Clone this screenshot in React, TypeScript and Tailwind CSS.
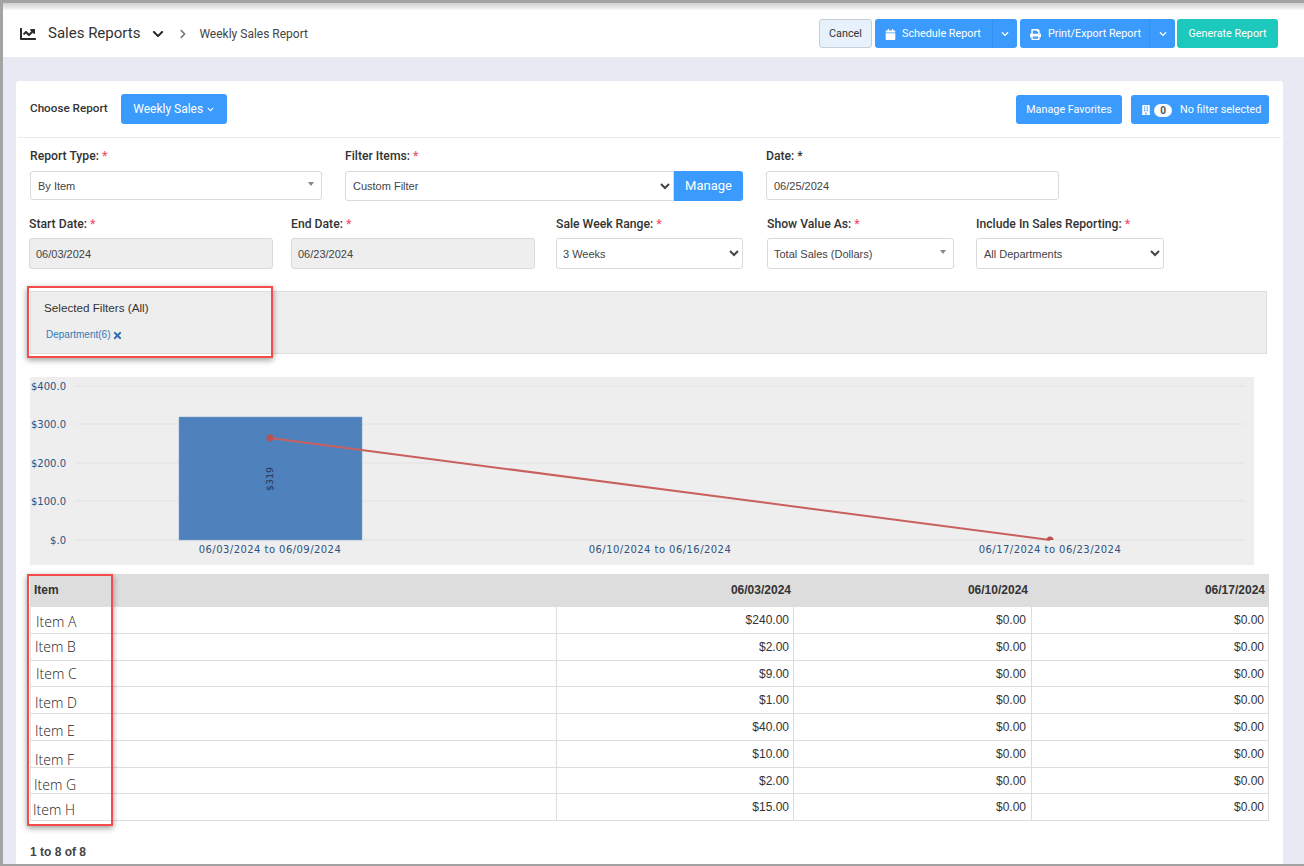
import { FaBuilding, FaCalendar, FaChartLine, FaChevronDown, FaChevronRight, FaPrint, FaTimes } from "react-icons/fa";

const rows = [
  { name: "Item A", value: "$240.00", cell: "h-[26px] pt-[4px] pl-[5px]" },
  { name: "Item B", value: "$2.00", cell: "h-[26px] pl-[4px]" },
  { name: "Item C", value: "$9.00", cell: "h-[25px] pl-[5px]" },
  { name: "Item D", value: "$1.00", cell: "h-[26px] pt-[6px] pl-[4px]" },
  { name: "Item E", value: "$40.00", cell: "h-[26px] pt-[8px] pl-[4px]" },
  { name: "Item F", value: "$10.00", cell: "h-[26px] pt-[12px] pl-[4px]" },
  { name: "Item G", value: "$2.00", cell: "h-[25px] pt-[9px] pl-[3px]" },
  { name: "Item H", value: "$15.00", cell: "h-[26px] pt-[6px] pl-[2px]" },
];

const gridLines = [
  { y: 9, label: "$400.0" },
  { y: 47, label: "$300.0" },
  { y: 86, label: "$200.0" },
  { y: 124, label: "$100.0" },
  { y: 163, label: "$.0" },
];

function Label({ text, plain }: { text: string; plain?: boolean }) {
  return (
    <div className="h-[18px] text-[12.2px] leading-[18px] font-medium text-[#333]">
      {text} <span className={plain ? "text-[#333]" : "text-[#f4516c]"}>*</span>
    </div>
  );
}

function FakeSelect({ text, inset }: { text: string; inset: string }) {
  return (
    <div className={`flex h-full items-center justify-between rounded-[3px] border border-[#d9d9d9] bg-white pr-[7px] font-['Liberation_Sans',sans-serif] text-[11px] text-[#444] ${inset}`}>
      <span className="pt-[2px]">{text}</span>
      <span className="mb-[4px] h-0 w-0 border-x-[3px] border-t-[4px] border-x-transparent border-t-[#888]" />
    </div>
  );
}

function NativeSelect({ text, className }: { text: string; className: string }) {
  return (
    <select
      defaultValue={text}
      className={`border border-[#d9d9d9] bg-white font-['Liberation_Sans',sans-serif] text-[11px] text-[#444] outline-none ${className}`}
    >
      <option>{text}</option>
    </select>
  );
}

function SalesChart() {
  return (
    <div className="mt-[23px] ml-[14px] h-[188px] w-[1224px] bg-[#eeeeee]">
      <svg width="1224" height="188" viewBox="0 0 1224 188" className="block">
        {gridLines.map((g) => (
          <g key={g.label}>
            <line x1="45" x2="1215" y1={g.y} y2={g.y} stroke="#e2e2e2" strokeWidth="1" />
            <text x="36" y={g.y + 4} textAnchor="end" fontFamily="DejaVu Sans, sans-serif" fontSize="10" fill="#2f5280">
              {g.label}
            </text>
          </g>
        ))}
        <rect x="149" y="40" width="183" height="123" fill="#4f81bd" stroke="#7ea3d0" strokeWidth="0.5" />
        <text
          transform="translate(243 102) rotate(-90)"
          textAnchor="middle"
          fontFamily="DejaVu Sans, sans-serif"
          fontSize="9.5"
          fill="#27374d"
        >
          $319
        </text>
        <line x1="240" y1="61" x2="1020" y2="163" stroke="#c9605d" strokeWidth="2" />
        <circle cx="240" cy="61" r="3.4" fill="#c0504d" />
        <path d="M1016.5 163 A3.5 3.5 0 0 1 1023.5 163 Z" fill="#c0504d" />
        {[
          { x: 240, label: "06/03/2024 to 06/09/2024" },
          { x: 630, label: "06/10/2024 to 06/16/2024" },
          { x: 1020, label: "06/17/2024 to 06/23/2024" },
        ].map((t) => (
          <text
            key={t.label}
            x={t.x}
            y="176"
            textAnchor="middle"
            fontFamily="DejaVu Sans, sans-serif"
            fontSize="10"
            fill="#2f5280"
            letterSpacing="0.45"
          >
            {t.label}
          </text>
        ))}
      </svg>
    </div>
  );
}

function ReportTable() {
  return (
    <div className="mt-[9px] ml-[14px] w-[1239px] font-['Liberation_Sans',sans-serif] text-[12px] text-[#333]">
      <div className="grid h-[33px] grid-cols-[527px_237px_238px_237px] items-center bg-[#dddddd] font-bold">
        <div className="pb-[2px] pl-[4px]">Item</div>
        <div className="pr-[3px] pb-[2px] text-right">06/03/2024</div>
        <div className="pr-[4px] pb-[2px] text-right">06/10/2024</div>
        <div className="pr-[4px] pb-[2px] text-right">06/17/2024</div>
      </div>
      <div className="border-l border-[#dddddd]">
        {rows.map((r) => (
          <div key={r.name} className="grid grid-cols-[526px_237px_238px_237px] border-b border-[#dddddd]">
            <div className={`flex items-center border-r border-[#dddddd] font-['Open_Sans',sans-serif] text-[14px] leading-[14px] font-light text-[#222] ${r.cell}`}>
              {r.name}
            </div>
            <div className="flex items-center justify-end border-r border-[#dddddd] pr-[4px]">{r.value}</div>
            <div className="flex items-center justify-end border-r border-[#dddddd] pr-[5px]">$0.00</div>
            <div className="flex items-center justify-end border-r border-[#dddddd] pr-[4px]">$0.00</div>
          </div>
        ))}
      </div>
    </div>
  );
}

export default function App() {
  return (
    <div className="relative h-[866px] w-[1304px] overflow-hidden border-t-[3px] border-b-[2px] border-l-[3px] border-[#a3a3a3] bg-[#e8eaf3] font-['Roboto',sans-serif]">
      <div className="h-[7px] bg-gradient-to-b from-[#cfcfcf] to-[#f7f7f7]" />

      {/* top bar */}
      <header className="flex h-[47px] items-center justify-between bg-white pr-[26px] pl-[17px]">
        <div className="flex items-center text-[#333]">
          <FaChartLine className="text-[16px] text-[#2b2b2b]" />
          <span className="ml-[12px] text-[15px]">Sales Reports</span>
          <FaChevronDown className="ml-[12px] text-[12px] text-[#222]" />
          <FaChevronRight className="ml-[14px] text-[10px] text-[#777]" />
          <span className="ml-[11px] text-[12px] text-[#444]">Weekly Sales Report</span>
        </div>
        <div className="flex h-[29px] items-stretch text-[10.8px] text-white">
          <button className="w-[53px] rounded-[3px] border border-[#c9ced6] bg-[#e6f1fb] pt-[2px] text-[#333]">Cancel</button>
          <button className="ml-[3px] flex w-[117px] items-center rounded-l-[3px] bg-[#3a9bfd] pt-[2px] pl-[10px]">
            <FaCalendar className="text-[11px]" />
            <span className="ml-[6px]">Schedule Report</span>
          </button>
          <button className="flex w-[25px] items-center justify-center rounded-r-[3px] border-l border-[#3592f0] bg-[#3a9bfd]">
            <FaChevronDown className="text-[8px]" />
          </button>
          <button className="ml-[3px] flex w-[129px] items-center rounded-l-[3px] bg-[#3a9bfd] pt-[2px] pl-[10px]">
            <FaPrint className="text-[11px]" />
            <span className="ml-[7px]">Print/Export Report</span>
          </button>
          <button className="flex w-[26px] items-center justify-center rounded-r-[3px] border-l border-[#3592f0] bg-[#3a9bfd]">
            <FaChevronDown className="text-[8px]" />
          </button>
          <button className="ml-[2px] w-[101px] rounded-[3px] bg-[#1dc8bd] pt-[2px]">Generate Report</button>
        </div>
      </header>

      {/* report card */}
      <main className="mt-[24px] ml-[13px] h-[800px] w-[1267px] rounded-t-[3px] bg-white">
        <div className="mx-[2px] flex h-[57px] items-center justify-between border-b border-[#ebebeb] pr-[12px] pl-[12px]">
          <div className="flex items-center">
            <span className="text-[11.7px] font-medium text-[#333]">Choose Report</span>
            <button className="ml-[13px] flex h-[30px] w-[106px] items-center justify-center gap-[4px] rounded-[3px] bg-[#3a9bfd] text-[12px] text-white">
              Weekly Sales
              <FaChevronDown className="text-[7px]" />
            </button>
          </div>
          <div className="flex h-[29px] gap-[9px] text-[10.8px] text-white">
            <button className="w-[106px] rounded-[3px] bg-[#3a9bfd] pt-[2px]">Manage Favorites</button>
            <button className="flex w-[138px] items-center rounded-[3px] bg-[#3a9bfd] pt-[2px] pl-[10px]">
              <FaBuilding className="text-[10px]" />
              <span className="ml-[3px] flex h-[13px] w-[18px] items-center justify-center rounded-full bg-white text-[10px] font-bold text-[#555]">
                0
              </span>
              <span className="ml-[8px]">No filter selected</span>
            </button>
          </div>
        </div>

        <div className="mt-[9px] flex pl-[14px]">
          <div className="w-[292px]">
            <Label text="Report Type:" />
            <div className="mt-[6px] h-[29px]">
              <FakeSelect text="By Item" inset="pl-[7px]" />
            </div>
          </div>
          <div className="ml-[23px] w-[398px]">
            <Label text="Filter Items:" />
            <div className="mt-[6px] flex h-[30px]">
              <NativeSelect text="Custom Filter" className="h-full w-[329px] rounded-l-[3px] pl-[3px]" />
              <button className="w-[69px] rounded-r-[3px] bg-[#3a9bfd] pb-[1px] text-[13px] text-white">Manage</button>
            </div>
          </div>
          <div className="ml-[23px] w-[293px]">
            <Label text="Date:" plain />
            <div className="mt-[6px] flex h-[29px] items-center rounded-[3px] border border-[#d9d9d9] pt-[2px] pl-[7px] font-['Liberation_Sans',sans-serif] text-[11px] text-[#444]">
              06/25/2024
            </div>
          </div>
        </div>

        <div className="mt-[14px] flex pl-[13px]">
          <div className="w-[244px]">
            <Label text="Start Date:" />
            <div className="mt-[5px] flex h-[31px] items-center rounded-[3px] border border-[#d9d9d9] bg-[#eeeeee] pt-[2px] pl-[6px] font-['Liberation_Sans',sans-serif] text-[11px] text-[#444]">
              06/03/2024
            </div>
          </div>
          <div className="ml-[18px] w-[244px]">
            <Label text="End Date:" />
            <div className="mt-[5px] flex h-[31px] items-center rounded-[3px] border border-[#d9d9d9] bg-[#eeeeee] pt-[2px] pl-[6px] font-['Liberation_Sans',sans-serif] text-[11px] text-[#444]">
              06/23/2024
            </div>
          </div>
          <div className="ml-[21px] w-[187px]">
            <Label text="Sale Week Range:" />
            <NativeSelect text="3 Weeks" className="mt-[5px] h-[31px] w-full rounded-[3px] pl-[2px]" />
          </div>
          <div className="ml-[24px] w-[187px]">
            <Label text="Show Value As:" />
            <div className="mt-[5px] h-[31px]">
              <FakeSelect text="Total Sales (Dollars)" inset="pl-[6px]" />
            </div>
          </div>
          <div className="ml-[22px] w-[188px]">
            <Label text="Include In Sales Reporting:" />
            <NativeSelect text="All Departments" className="mt-[5px] h-[31px] w-full rounded-[3px] pl-[3px]" />
          </div>
        </div>

        {/* selected filters */}
        <div className="mt-[22px] ml-[14px] h-[63px] w-[1237px] border border-[#dddddd] bg-[#eeeeee] pt-[9px] pl-[13px]">
          <div className="font-['Liberation_Sans',sans-serif] text-[11.7px] leading-[14px] text-[#333]">Selected Filters (All)</div>
          <div className="mt-[14px] ml-[2px] flex items-center gap-[2px] font-['Liberation_Sans',sans-serif] text-[10px] leading-[12px] text-[#337ab7]">
            Department(6)
            <FaTimes className="text-[11px] text-[#2f6fb0]" />
          </div>
        </div>

        <SalesChart />
        <ReportTable />

        <div className="mt-[22px] ml-[14px] font-['Liberation_Sans',sans-serif] text-[12px] font-bold text-[#444]">1 to 8 of 8</div>
      </main>

      {/* red annotation boxes */}
      <div className="absolute top-[283px] left-[24px] h-[72px] w-[246px] border-[2px] border-[#f44b4b] shadow-[0_2px_6px_rgba(0,0,0,0.4)]" />
      <div className="absolute top-[571px] left-[24px] h-[252px] w-[86px] border-[2px] border-[#f44b4b] shadow-[0_2px_6px_rgba(0,0,0,0.4)]" />
    </div>
  );
}
